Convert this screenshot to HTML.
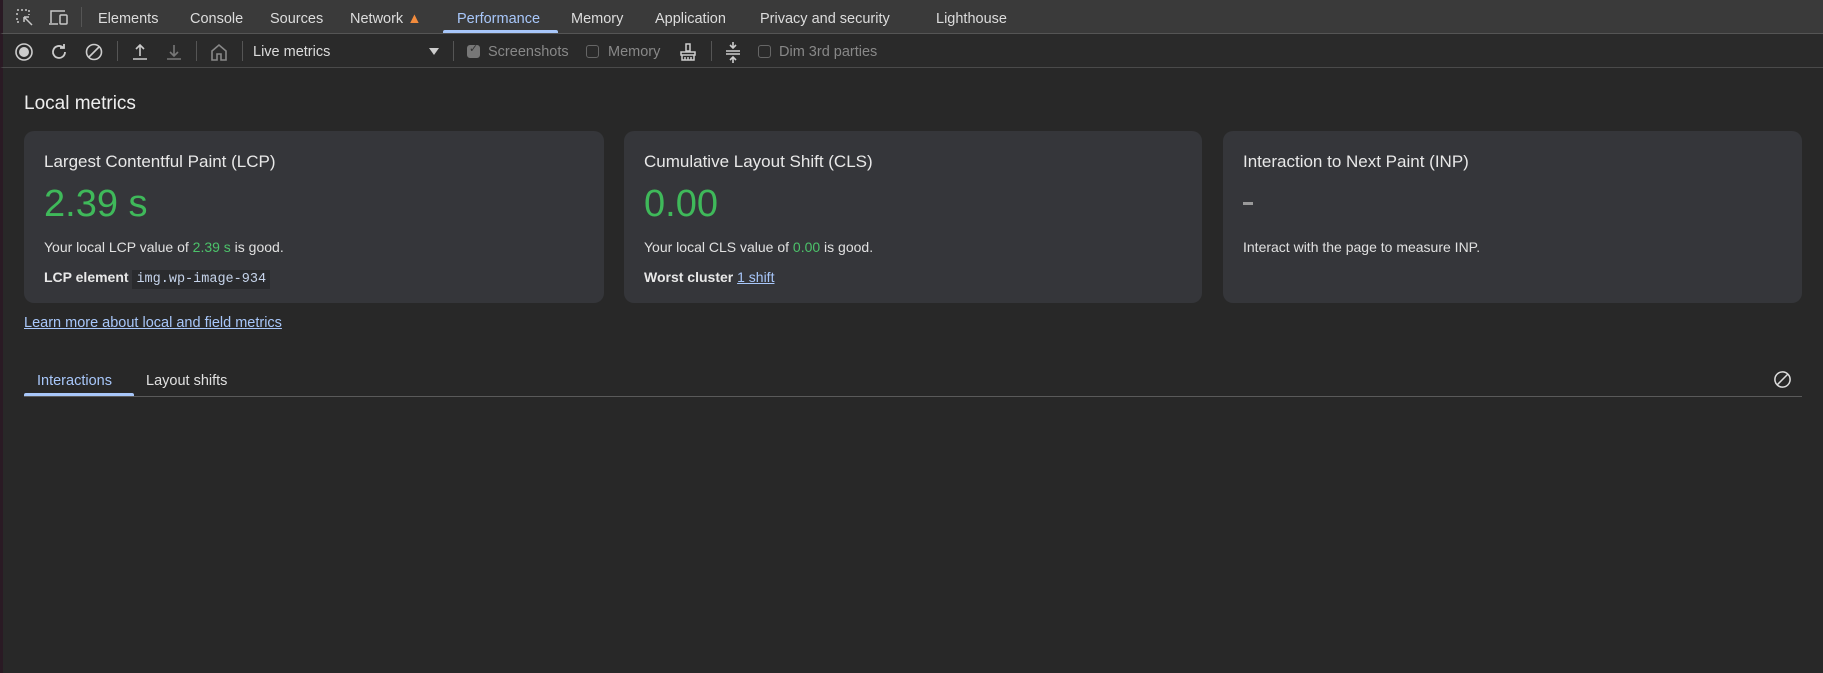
<!DOCTYPE html>
<html><head><meta charset="utf-8"><style>
*{box-sizing:border-box;margin:0;padding:0}
body{width:1823px;height:673px;background:#282828;font-family:"Liberation Sans",sans-serif;color:#e3e3e3;position:relative;overflow:hidden}
.abs{position:absolute;white-space:nowrap}
#tabs{position:absolute;left:0;top:0;width:1823px;height:34px;background:#3a3a3a;border-bottom:1px solid #555;border-left:3px solid #2a1a24}
#tb{position:absolute;left:0;top:34px;width:1823px;height:34px;background:#2a2a2a;border-bottom:1px solid #4a4a4a;border-left:3px solid #2a1a24}
#main{position:absolute;left:0;top:68px;width:1823px;height:605px;border-left:3px solid #2a1a24}
.tab{position:absolute;top:11px;font-size:14.5px;color:#dcdcdc}
.sep{position:absolute;width:1px;height:20px;background:#555}
.card{position:absolute;top:131px;height:172px;background:#35363a;border-radius:10px}
.ct{position:absolute;left:20px;top:21px;font-size:17px;color:#e8e8e8}
.cv{position:absolute;left:20px;top:52px;font-size:38px;color:#3fb95a}
.cd{position:absolute;left:20px;top:108px;font-size:14px;color:#e0e0e0}
.ce{position:absolute;left:20px;top:138px;font-size:14px;color:#e8e8e8;font-weight:bold}
.g{color:#4cc26a}
.cb{position:absolute;width:13px;height:13px;border:1.5px solid #666;border-radius:3px;top:45px}
svg{position:absolute}
</style></head><body>
<div id="tabs"></div>
<div id="tb"></div>
<div id="main"></div>
<svg style="left:16px;top:9px" width="18" height="18" viewBox="0 0 18 18" fill="none" stroke="#c8c8c8" stroke-width="1.5"><path d="M1 1h2M5 1h2M9 1h2M1 4v2M1 9v2M1 13h2M13 1v2M13 5v1"/><path d="M8 8l8 8M8 8h5M8 8v5"/></svg>
<svg style="left:48px;top:9px" width="22" height="18" viewBox="0 0 22 18" fill="none" stroke="#c8c8c8" stroke-width="1.5"><path d="M3 14V2h14M1 15h9"/><rect x="12" y="6" width="7" height="9" rx="1"/></svg>
<div class="sep" style="left:81px;top:7px"></div>
<div class="tab" style="left:98px">Elements</div>
<div class="tab" style="left:190px">Console</div>
<div class="tab" style="left:270px">Sources</div>
<div class="tab" style="left:350px">Network <span style="color:#f28b3c">▲</span></div>
<div class="tab" style="left:457px;color:#a8c7fa">Performance</div>
<div class="abs" style="left:443px;top:30px;width:115px;height:3px;background:#a8c7fa;border-radius:2px 2px 0 0"></div>
<div class="tab" style="left:571px">Memory</div>
<div class="tab" style="left:655px">Application</div>
<div class="tab" style="left:760px">Privacy and security</div>
<div class="tab" style="left:936px">Lighthouse</div>
<svg style="left:14px;top:42px" width="20" height="20" viewBox="0 0 20 20"><circle cx="10" cy="10" r="8" fill="none" stroke="#ccc" stroke-width="1.6"/><circle cx="10" cy="10" r="5" fill="#ccc"/></svg>
<svg style="left:49px;top:42px" width="20" height="20" viewBox="0 0 20 20" fill="none" stroke="#ccc" stroke-width="1.8"><path d="M16 10a6 6 0 1 1-2-4.5"/><path d="M15 2v4h-4"/></svg>
<svg style="left:84px;top:42px" width="20" height="20" viewBox="0 0 20 20" fill="none" stroke="#ccc" stroke-width="1.6"><circle cx="10" cy="10" r="7.5"/><path d="M5 15L15 5"/></svg>
<div class="sep" style="left:117px;top:41px"></div>
<svg style="left:130px;top:42px" width="20" height="20" viewBox="0 0 20 20" fill="none" stroke="#ccc" stroke-width="1.6"><path d="M10 14V3M6 7l4-4 4 4M3 17h14"/></svg>
<svg style="left:164px;top:42px" width="20" height="20" viewBox="0 0 20 20" fill="none" stroke="#777" stroke-width="1.6"><path d="M10 3v11M6 10l4 4 4-4M3 17h14"/></svg>
<div class="sep" style="left:196px;top:41px"></div>
<svg style="left:209px;top:42px" width="20" height="20" viewBox="0 0 20 20" fill="none" stroke="#888" stroke-width="1.6"><path d="M3 9l7-6 7 6v9h-5v-6H8v6H3z"/></svg>
<div class="sep" style="left:242px;top:41px"></div>
<div class="abs" style="left:253px;top:44px;font-size:14.5px;color:#dcdcdc">Live metrics</div>
<div class="abs" style="left:429px;top:48px;width:0;height:0;border-left:5px solid transparent;border-right:5px solid transparent;border-top:7px solid #ccc"></div>
<div class="sep" style="left:453px;top:41px"></div>
<div class="cb" style="left:467px;background:#777;border-color:#777"></div>
<div class="abs" style="left:469px;top:42px;font-size:11px;color:#333">✓</div>
<div class="abs" style="left:488px;top:44px;font-size:14.5px;color:#888">Screenshots</div>
<div class="cb" style="left:586px"></div>
<div class="abs" style="left:608px;top:44px;font-size:14.5px;color:#888">Memory</div>
<svg style="left:679px;top:42px" width="18" height="20" viewBox="0 0 18 20" fill="none" stroke="#ccc" stroke-width="1.5"><path d="M7 2h4v7H7zM2 10h14v3H2zM3 13v5h12v-5M6 18v-3M9 18v-3M12 18v-3"/></svg>
<div class="sep" style="left:711px;top:41px"></div>
<svg style="left:724px;top:41px" width="18" height="22" viewBox="0 0 18 22" fill="none" stroke="#ccc" stroke-width="1.6"><path d="M2 10h14M2 13h14M9 1v6M6 4l3 3 3-3M9 22v-6M6 19l3-3 3 3"/></svg>
<div class="cb" style="left:758px"></div>
<div class="abs" style="left:779px;top:44px;font-size:14.5px;color:#888">Dim 3rd parties</div>
<div class="abs" style="left:24px;top:93px;font-size:19px;color:#eee">Local metrics</div>
<div class="card" style="left:24px;width:580px">
<div class="ct">Largest Contentful Paint (LCP)</div>
<div class="cv">2.39 s</div>
<div class="cd">Your local LCP value of <span class="g">2.39 s</span> is good.</div>
<div class="ce">LCP element <span style="font-family:'Liberation Mono',monospace;font-weight:normal;font-size:13.5px;color:#c5d3ea;background:#2a2b2e;padding:2px 4px">img.wp-image-934</span></div>
</div>
<div class="card" style="left:624px;width:578px">
<div class="ct">Cumulative Layout Shift (CLS)</div>
<div class="cv">0.00</div>
<div class="cd">Your local CLS value of <span class="g">0.00</span> is good.</div>
<div class="ce">Worst cluster <span style="font-weight:normal;color:#a8c7fa;text-decoration:underline">1 shift</span></div>
</div>
<div class="card" style="left:1223px;width:579px">
<div class="ct">Interaction to Next Paint (INP)</div>
<div class="abs" style="left:20px;top:71px;width:10px;height:3px;background:#999"></div>
<div class="cd">Interact with the page to measure INP.</div>
</div>
<div class="abs" style="left:24px;top:315px;font-size:14.5px;color:#a8c7fa;text-decoration:underline">Learn more about local and field metrics</div>
<div class="abs" style="left:37px;top:373px;font-size:14.5px;color:#a8c7fa">Interactions</div>
<div class="abs" style="left:146px;top:373px;font-size:14.5px;color:#e0e0e0">Layout shifts</div>
<div class="abs" style="left:24px;top:396px;width:1778px;height:1px;background:#5a5a5a"></div>
<div class="abs" style="left:24px;top:393px;width:110px;height:3px;background:#a8c7fa;border-radius:2px 2px 0 0"></div>
<svg style="left:1773px;top:370px" width="19" height="19" viewBox="0 0 20 20" fill="none" stroke="#ddd" stroke-width="1.6"><circle cx="10" cy="10" r="8"/><path d="M4.5 15.5L15.5 4.5"/></svg>
</body></html>
